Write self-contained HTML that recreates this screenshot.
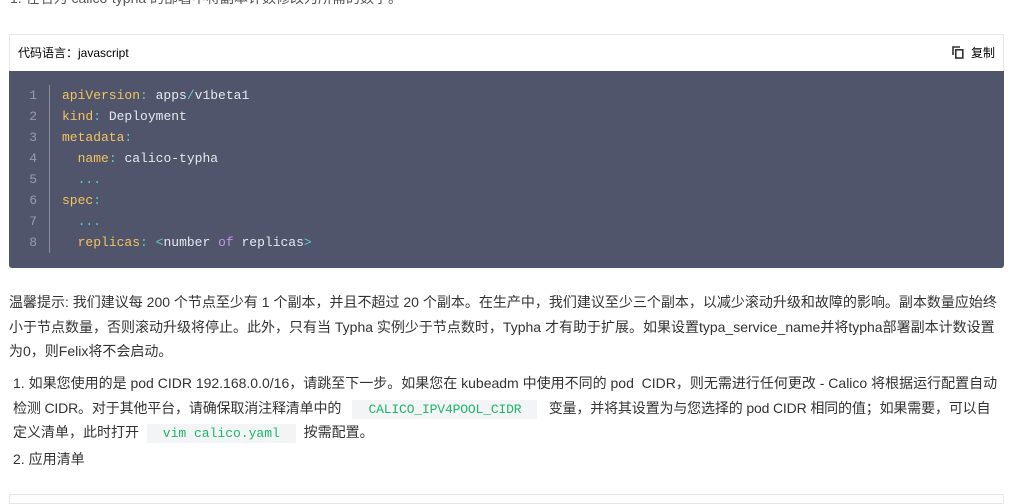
<!DOCTYPE html>
<html><head><meta charset="utf-8"><style>
body{margin:0;width:1014px;height:498px;overflow:hidden;background:#fff;font-family:"Liberation Sans","Noto Sans CJK SC",sans-serif;color:#333;position:relative}
.t{position:absolute;font-size:14px;white-space:nowrap;line-height:20px}
.box{position:absolute;left:9px;top:34px;width:995px;height:233px;border:1px solid #e5e6eb;border-bottom:none;box-sizing:border-box}
.hd{height:36px;font-size:12px;color:#000;line-height:36px;padding-left:8px;position:relative}
.cp{position:absolute;right:8px;top:0;font-size:12px}
.code{position:absolute;left:-1px;right:-1px;top:36px;height:197px;background:#50556b;border-radius:0 0 3px 3px;font-family:"Liberation Mono","DejaVu Sans Mono",monospace;font-size:13px}
.ln{position:absolute;left:0;top:14px;border-right:1px solid #8a8e9c;color:#999cab;text-align:right;padding-right:12px;box-sizing:border-box;width:41px;line-height:21px}
.src{position:absolute;left:53px;top:14px;line-height:21px;color:#e6e8ee;white-space:pre}
.k{color:#f2c45c}.p{color:#5fc8d0}.m{color:#c792ea}
.ic{font-family:"Liberation Mono",monospace;font-size:13px;color:#1eb668;background:#f3f4f6;padding:2px 16px;}
</style></head><body>
<div class="t" style="left:10px;top:-12px;color:#555">1. 在名为 calico-typha 的部署中将副本计数修改为所需的数字。</div>
<div class="box">
<div class="hd">代码语言：javascript<span class="cp"><svg width="12" height="13" viewBox="0 0 12 13" style="vertical-align:-2px;margin-right:7px"><path d="M1 9V1h7" fill="none" stroke="#333" stroke-width="1.6"/><rect x="3.8" y="3.8" width="7" height="8.2" fill="none" stroke="#333" stroke-width="1.6"/></svg>复制</span></div>
<div class="code">
<div class="ln">1<br>2<br>3<br>4<br>5<br>6<br>7<br>8</div>
<div class="src"><span class="k">apiVersion</span><span class="p">:</span> apps<span class="p">/</span>v1beta1
<span class="k">kind</span><span class="p">:</span> Deployment
<span class="k">metadata</span><span class="p">:</span>
  <span class="k">name</span><span class="p">:</span> calico-typha
  <span class="p">...</span>
<span class="k">spec</span><span class="p">:</span>
  <span class="p">...</span>
  <span class="k">replicas</span><span class="p">:</span> <span class="p">&lt;</span>number <span class="m">of</span> replicas<span class="p">&gt;</span></div>
</div></div>
<div class="t" style="left:9px;top:292px">温馨提示: 我们建议每 200 个节点至少有 1 个副本，并且不超过 20 个副本。在生产中，我们建议至少三个副本，以减少滚动升级和故障的影响。副本数量应始终</div>
<div class="t" style="left:9px;top:317px">小于节点数量，否则滚动升级将停止。此外，只有当 Typha 实例少于节点数时，Typha 才有助于扩展。如果设置typa_service_name并将typha部署副本计数设置</div>
<div class="t" style="left:9px;top:341px">为0，则Felix将不会启动。</div>
<div class="t" style="left:13px;top:373px">1. 如果您使用的是 pod CIDR 192.168.0.0/16，请跳至下一步。如果您在 kubeadm 中使用不同的 pod&nbsp; CIDR，则无需进行任何更改 - Calico 将根据运行配置自动</div>
<div class="t" style="left:13px;top:398px;letter-spacing:-0.15px">检测 CIDR。对于其他平台，请确保取消注释清单中的 &nbsp; <span class="ic">CALICO_IPV4POOL_CIDR</span> &nbsp; 变量，并将其设置为与您选择的 pod CIDR 相同的值；如果需要，可以自</div>
<div class="t" style="left:13px;top:422px">定义清单，此时打开 &nbsp;<span class="ic">vim calico.yaml</span>&nbsp; 按需配置。</div>
<div class="t" style="left:13px;top:449px">2. 应用清单</div>
<div style="position:absolute;left:9px;top:494px;width:995px;height:10px;border:1px solid #e5e6eb;box-sizing:border-box"></div>
</body></html>
